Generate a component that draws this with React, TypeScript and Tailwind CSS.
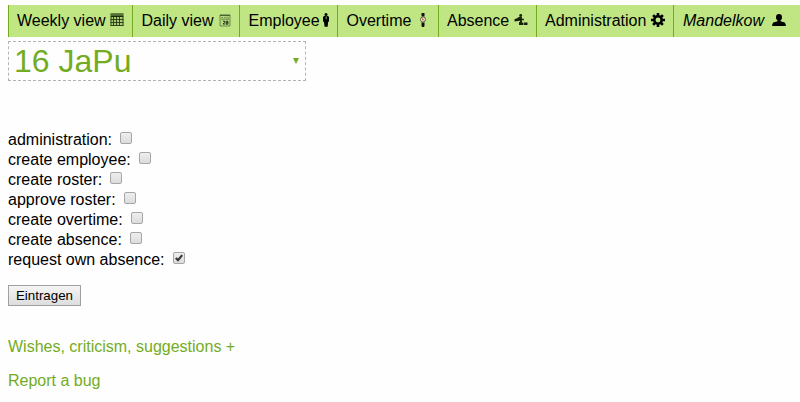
import React from "react";

function CalendarIcon() {
  return (
    <svg className="h-[14px] w-[14px]" viewBox="0 0 14 14">
      <path d="M0.5 0.5h13v12.5h-13z" fill="#a9cf73" />
      <path d="M0.5 0.5h13v1h-13zM0.5 3h13v1h-13z" fill="#1d2a0c" />
      <path d="M0.5 1.5h13v1.5h-13z" fill="#506534" />
      <path d="M0.5 6.5h13M0.5 9.5h13M0.5 12.5h13M1 4v9M3.5 4v9M6.5 4v9M9.5 4v9M13 4v9" stroke="#293915" strokeWidth="0.9" />
    </svg>
  );
}

function DayIcon() {
  return (
    <svg className="h-[13px] w-[12px]" viewBox="0 0 12 13">
      <path d="M1 1h10v11H1z" fill="#b4dc7b" stroke="#668049" strokeWidth="0.9" />
      <path d="M1 1.3h10" stroke="#3c5223" />
      <path d="M2.5 3.5h1.5M5 3.5h1.5M8 2.5v2M9.5 3.5v1M2 5.2h8" stroke="#668049" strokeWidth="0.9" />
      <path d="M4 7.2h1.7v1.2L4 10h2M7.2 7.2h1.7v3H7.2zM7.2 8.7h1.7" fill="none" stroke="#1c280d" strokeWidth="0.9" />
    </svg>
  );
}

function EmployeeIcon() {
  return (
    <svg className="h-[14px] w-[6px]" viewBox="0 0 6 14">
      <circle cx="3" cy="1.5" r="1.5" />
      <path d="M1 3h4l1 1v4.5l-.9.5-.4 4.7H1.6L1 9 0 8.5V4z" />
      <path d="M3.2 3.3v3" stroke="#b4dc7b" strokeWidth="0.7" />
    </svg>
  );
}

function WatchIcon() {
  return (
    <svg className="h-[14px] w-[6px]" viewBox="0 0 6 14">
      <path d="M1.5 0h3v3.5h-3zM1.5 9.5h3V13l-.6 1H2.1l-.6-1z" fill="#111" />
      <circle cx="3" cy="6.5" r="2.6" fill="#e0e5d8" stroke="#39422a" strokeWidth="0.8" />
      <path d="M2.5 5.2v1.5h1.8" fill="none" stroke="#d33b20" strokeWidth="0.8" />
    </svg>
  );
}

function AbsenceIcon() {
  return (
    <svg className="h-[12px] w-[14px]" viewBox="0 0 14 12">
      <circle cx="6.7" cy="1.5" r="1.4" fill="#17200b" />
      <path d="M5.3 2.8h2.6v2h2v1.5h-2v2.2h1.5v2.6H5V8h1V6.8L.5 7.5V5.3L3 4.2z" fill="#17200b" />
      <path d="M10 8.5h3.5V11H10z" fill="#17200b" />
    </svg>
  );
}

function GearIcon() {
  return (
    <svg className="h-[14px] w-[14px]" viewBox="0 0 14 14">
      <circle cx="7" cy="7" r="3.7" fill="none" stroke="black" strokeWidth="2.5" />
      <path d="M7 0v2.8M7 11.2V14M0 7h2.8M11.2 7H14M2.1 2.1l1.9 1.9M10 10l1.9 1.9M2.1 11.9l1.9-1.9M10 4l1.9-1.9" stroke="black" strokeWidth="2.6" />
    </svg>
  );
}

function UserIcon() {
  return (
    <svg className="h-[12px] w-[14px]" viewBox="0 0 14 12">
      <ellipse cx="7" cy="3.3" rx="3" ry="3.3" />
      <path d="M5.5 5.5h3v1.8l4.2 1.2Q13.9 9.5 13.9 12H.1Q.1 9.5 1.3 8.5l4.2-1.2z" />
    </svg>
  );
}

const menu = [
  { label: "Weekly view", width: "w-[124px] pl-2", icon: <CalendarIcon />, gap: "mr-[8px]" },
  { label: "Daily view", width: "w-[107px] pl-[8.5px]", icon: <DayIcon />, gap: "mr-[8px]" },
  { label: "Employee", width: "w-[98px] pl-[8.5px]", icon: <EmployeeIcon />, gap: "mr-[8px]" },
  { label: "Overtime", width: "w-[101px] pl-[8.5px]", icon: <WatchIcon />, gap: "mr-[12px]" },
  { label: "Absence", width: "w-[98px] pl-2", icon: <AbsenceIcon />, gap: "mr-[8px]" },
  { label: "Administration", width: "w-[137px] pl-2", icon: <GearIcon />, gap: "mr-[8px]" },
  { label: "Mandelkow", width: "w-[127px] pl-[9px] italic", icon: <UserIcon />, gap: "mr-[14px]" },
];

const permissions = [
  { label: "administration:", checked: false },
  { label: "create employee:", checked: false },
  { label: "create roster:", checked: false },
  { label: "approve roster:", checked: false },
  { label: "create overtime:", checked: false },
  { label: "create absence:", checked: false },
  { label: "request own absence:", checked: true },
];

function Checkbox({ checked }: { checked: boolean }) {
  return (
    <span
      role="checkbox"
      aria-checked={checked}
      className="mb-[4px] ml-[8px] block h-[12px] w-[12px] rounded-[2px] border border-[#a6a6a6] bg-linear-to-b from-[#eeeeee] to-[#dcdcdc]"
    >
      {checked && (
        <svg className="h-[10px] w-[10px]" viewBox="0 0 11 11">
          <path d="M2 5.5 4.4 8 9 2.3" fill="none" stroke="#333" strokeWidth="2.3" />
        </svg>
      )}
    </span>
  );
}

export default function App() {
  return (
    <div className="h-[402px] w-full overflow-hidden bg-[#fefefe] pt-[5px] pl-2 font-['Liberation_Sans',Arial,sans-serif] text-base leading-5 text-black">
      <nav className="flex h-8 bg-[#bfe682]">
        {menu.map((item) => (
          <a key={item.label} className={`flex shrink-0 items-center border-l border-[#73ac23] whitespace-nowrap ${item.width}`}>
            <span>{item.label}</span>
            <span className={`-mt-[2px] ml-auto shrink-0 ${item.gap}`}>{item.icon}</span>
          </a>
        ))}
      </nav>
      <div className="mt-1 flex h-10 w-[298px] items-center justify-between border border-dashed border-[#b3b3b3] pr-[6px] pl-[5px] text-[#73ac23]">
        <span className="text-[32px] leading-9">16 JaPu</span>
        <svg className="h-[6px] w-[6px]" viewBox="0 0 6 6">
          <path d="M0 0h6L3 6z" fill="#73ac23" />
        </svg>
      </div>
      <form className="mt-[49px]">
        {permissions.map((item) => (
          <div key={item.label} className="flex h-5 items-center">
            <span>{item.label}</span>
            <Checkbox checked={item.checked} />
          </div>
        ))}
        <button type="button" className="mt-[15px] block h-[21px] w-[73px] border border-[#a0a0a0] bg-linear-to-b from-[#f5f5f5] to-[#dddddd] text-[13.33px] leading-[19px]">
          Eintragen
        </button>
      </form>
      <p className="mt-[31px] text-[#73ac23]">Wishes, criticism, suggestions +</p>
      <p className="mt-[14px] text-[#73ac23]">Report a bug</p>
    </div>
  );
}
